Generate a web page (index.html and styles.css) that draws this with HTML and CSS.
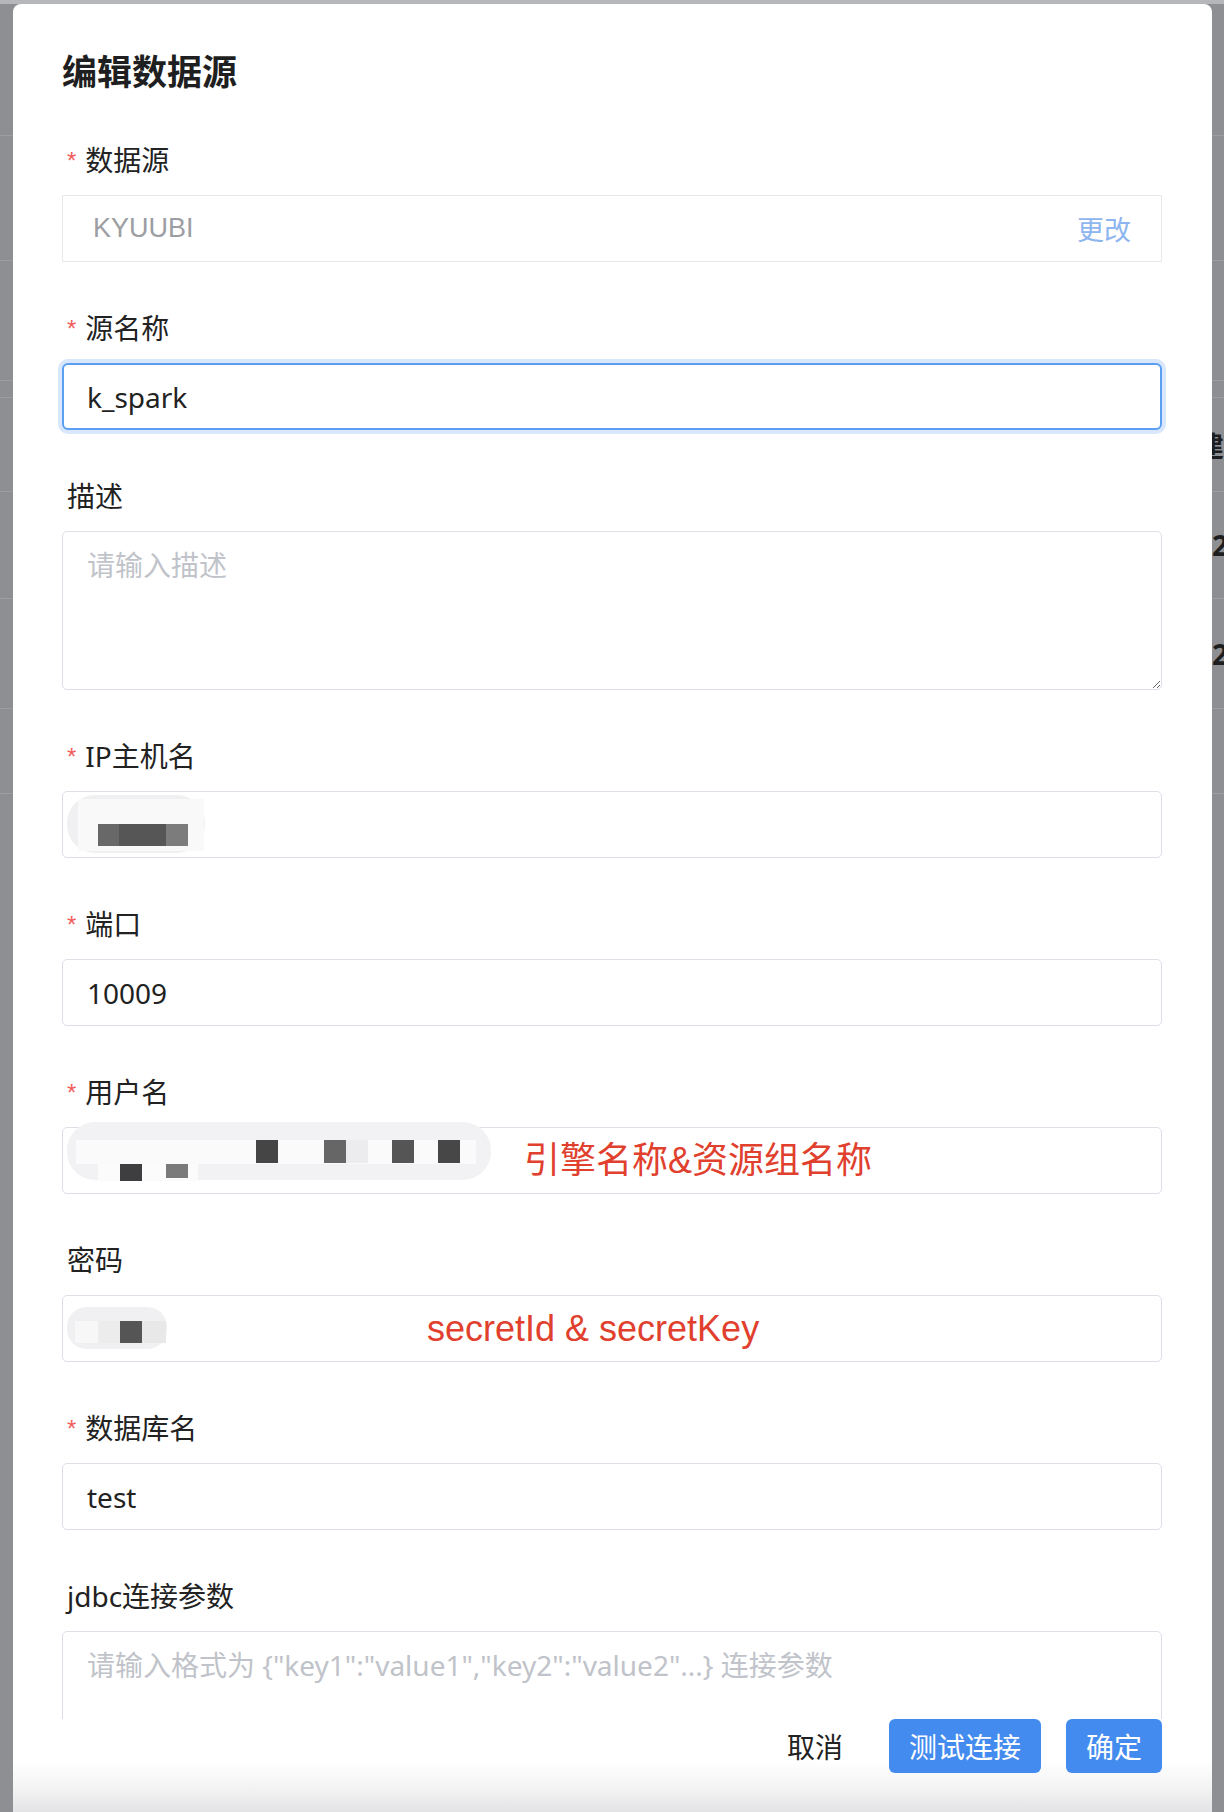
FILE: index.html
```html
<!doctype html>
<html>
<head>
	<meta charset="utf-8">
	<title>编辑数据源</title>
	<link rel="stylesheet" href="styles.css">
</head>
<body>
	<!-- page behind the overlay -->
	<div class="backdrop">
		<div class="bg-row" style="height: 132px"></div>
		<div class="bg-row" style="height: 125px"></div>
		<div class="bg-row" style="height: 120px"></div>
		<div class="bg-row" style="height: 17px"></div>
		<div class="bg-row" style="height: 94px"><span class="bg-text">建</span></div>
		<div class="bg-row" style="height: 107px"><span class="bg-text">02</span></div>
		<div class="bg-row" style="height: 110px"><span class="bg-text">02</span></div>
		<div class="bg-row" style="height: 85px"></div>
	</div>

	<div class="dialog">
		<div class="dialog-body">
			<h2 class="dialog-title">编辑数据源</h2>

			<div class="form-item">
				<label class="form-label required">数据源</label>
				<div class="input-static">
					<span class="static-value">KYUUBI</span>
					<a class="link-change">更改</a>
				</div>
			</div>

			<div class="form-item">
				<label class="form-label required">源名称</label>
				<input class="input is-focus" type="text" value="k_spark">
			</div>

			<div class="form-item">
				<label class="form-label">描述</label>
				<textarea class="textarea" placeholder="请输入描述"></textarea>
			</div>

			<div class="form-item">
				<label class="form-label required">IP主机名</label>
				<div class="input-wrap">
					<input class="input" type="text" value="">
					<svg class="mask" width="160" height="67" viewBox="0 0 160 67">
						<rect x="5" y="4" width="138" height="58" rx="28" fill="#f0f0f2"/>
						<rect x="16" y="8" width="126" height="52" fill="#f9f9fa"/>
						<rect x="36" y="33" width="21" height="22" fill="#686868"/>
						<rect x="57" y="33" width="47" height="22" fill="#565656"/>
						<rect x="104" y="33" width="22" height="22" fill="#7c7c7c"/>
					</svg>
				</div>
			</div>

			<div class="form-item">
				<label class="form-label required">端口</label>
				<input class="input" type="text" value="10009">
			</div>

			<div class="form-item">
				<label class="form-label required">用户名</label>
				<div class="input-wrap">
					<input class="input" type="text" value="">
					<svg class="mask" width="440" height="67" viewBox="0 0 440 67">
						<rect x="5" y="-5" width="424" height="58" rx="28" fill="#f2f2f4"/>
						<rect x="14" y="13" width="400" height="24" fill="#fafafb"/>
						<rect x="36" y="37" width="100" height="17" fill="#fbfbfc"/>
						<rect x="194" y="13" width="22" height="23" fill="#454545"/>
						<rect x="262" y="13" width="22" height="23" fill="#666666"/>
						<rect x="284" y="13" width="22" height="23" fill="#ececee"/>
						<rect x="330" y="13" width="22" height="23" fill="#555555"/>
						<rect x="376" y="13" width="22" height="23" fill="#474747"/>
						<rect x="58" y="37" width="22" height="17" fill="#3e3e40"/>
						<rect x="104" y="37" width="22" height="14" fill="#7a7a7a"/>
					</svg>
					<span class="note note-user">引擎名称&amp;资源组名称</span>
				</div>
			</div>

			<div class="form-item">
				<label class="form-label">密码</label>
				<div class="input-wrap">
					<input class="input" type="password" value="">
					<svg class="mask" width="120" height="67" viewBox="0 0 120 67">
						<rect x="5" y="12" width="100" height="42" rx="20" fill="#f0f0f2"/>
						<rect x="13" y="26" width="23" height="22" fill="#f7f7f8"/>
						<rect x="36" y="26" width="22" height="22" fill="#ececec"/>
						<rect x="58" y="26" width="22" height="22" fill="#555555"/>
						<rect x="80" y="26" width="24" height="22" fill="#e8e8e9"/>
					</svg>
					<span class="note note-pass">secretId &amp; secretKey</span>
				</div>
			</div>

			<div class="form-item">
				<label class="form-label required">数据库名</label>
				<input class="input" type="text" value="test">
			</div>

			<div class="form-item">
				<label class="form-label">jdbc连接参数</label>
				<textarea class="textarea" placeholder='请输入格式为 {"key1":"value1","key2":"value2"...} 连接参数'></textarea>
			</div>
		</div>

		<div class="dialog-footer">
			<button class="btn btn-text">取消</button>
			<button class="btn btn-primary">测试连接</button>
			<button class="btn btn-primary">确定</button>
		</div>
	</div>
</body>
</html>
```

FILE: styles.css
```css
body {
	margin: 0;
	background-color: #8e8f93;
	font-family: "Noto Sans", "Noto Sans CJK SC", sans-serif;
	color: #222;
	position: relative;
	height: 1812px;
	overflow: hidden;
}

.backdrop {
	border-top: 4px solid #b6b7bb;
}

.bg-row {
	border-bottom: 1px solid #9d9ea2;
	box-sizing: border-box;
	display: flex;
	align-items: center;
	padding-left: 1196px;
	overflow: hidden;
}

.bg-text {
	font-size: 28px;
	font-weight: bold;
	color: #1e1e20;
	white-space: nowrap;
}

/* dialog over the page */
.dialog {
	position: absolute;
	left: 13px;
	top: 4px;
	width: 1199px;
	height: 1808px;
	background-color: #fff;
	border-radius: 8px 8px 0 0;
	display: flex;
	flex-direction: column;
	overflow: hidden;
}

.dialog-body {
	flex: 1;
	overflow: hidden;
	padding: 44px 50px 0 49px;
}

.dialog-title {
	margin: 0 0 44px;
	font-size: 35px;
	line-height: 48px;
	font-weight: bold;
	color: #1f1f21;
}

.form-item {
	margin-bottom: 46px;
}

.form-label {
	display: block;
	height: 40px;
	line-height: 40px;
	font-size: 28px;
	padding-left: 5px;
	margin-bottom: 15px;
	color: #222;
}

.form-label.required:before {
	content: "*";
	font-family: "Liberation Sans", sans-serif;
	color: #f25b5b;
	font-size: 24px;
	margin-right: 9px;
	vertical-align: 2px;
}

.input,
.textarea {
	display: block;
	box-sizing: border-box;
	width: 100%;
	border: 1px solid #dcdfe6;
	border-radius: 5px;
	font: inherit;
	font-size: 28px;
	color: #222;
	background-color: #fff;
	outline: none;
}

.input {
	height: 67px;
	padding: 0 24px;
}

.input.is-focus {
	border: 2px solid #5c9ef0;
	box-shadow: 0 0 0 4px #d8e7fb;
	padding: 0 23px;
	border-radius: 6px;
}

.textarea {
	height: 159px;
	padding: 13px 24px;
	line-height: 40px;
	resize: vertical;
}

.input::placeholder,
.textarea::placeholder {
	color: #c0c3c9;
}

.input-static {
	display: flex;
	align-items: center;
	justify-content: space-between;
	box-sizing: border-box;
	height: 67px;
	border: 1px solid #e6e7ea;
	padding: 0 30px;
	font-size: 27px;
}

.static-value {
	font-family: "Liberation Sans", sans-serif;
	color: #9c9ea3;
}

.link-change {
	color: #8db5ef;
}

.input-wrap {
	position: relative;
}

.mask {
	position: absolute;
	left: 0;
	top: 0;
	overflow: visible;
}

.note {
	position: absolute;
	top: 0;
	line-height: 67px;
	font-family: "Liberation Sans", "Noto Sans CJK SC", sans-serif;
	font-size: 36px;
	color: #e0402d;
	white-space: nowrap;
}

.note-user {
	left: 462px;
}

.note-pass {
	left: 365px;
}

.dialog-footer {
	height: 93px;
	display: flex;
	justify-content: flex-end;
	align-items: flex-start;
	gap: 25px;
	padding-right: 50px;
	background: linear-gradient(#fff 0%, #fff 45%, #f3f3f4 75%, #e3e3e5 100%);
}

.btn {
	height: 54px;
	border: none;
	border-radius: 6px;
	padding: 0 20px;
	font: inherit;
	font-size: 28px;
	cursor: pointer;
}

.btn-text {
	background: transparent;
	color: #222;
	margin-right: 1px;
}

.btn-primary {
	background-color: #448bf0;
	color: #fff;
}
```
